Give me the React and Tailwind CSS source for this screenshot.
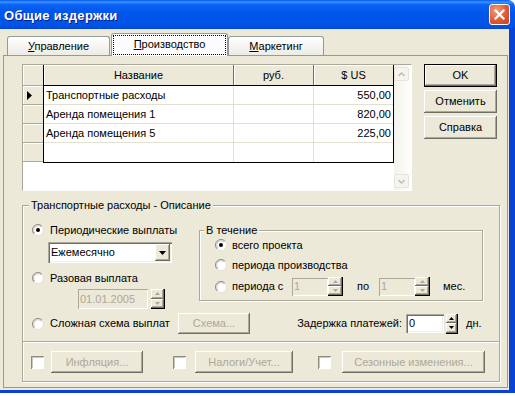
import React from "react";

const raised =
  "bg-[#ECE9D8] shadow-[inset_-1px_-1px_#716F64,inset_1px_1px_#FFFFFF,inset_-2px_-2px_#ACA899]";
const sunken =
  "shadow-[inset_1px_1px_#ACA899,inset_2px_2px_#716F64,inset_-1px_-1px_#FFFFFF,inset_-2px_-2px_#F1EFE2]";
const sunkenLite = "shadow-[inset_1px_1px_#ACA899,inset_-1px_-1px_#FFFFFF]";

function Radio({ checked }) {
  return (
    <svg width="12" height="12" viewBox="0 0 12 12" className="shrink-0">
      <circle cx="6" cy="6" r="5.5" fill="#FFFFFF" stroke="#E2E0D6" />
      <path d="M2.1 9.9 A5.5 5.5 0 0 1 9.9 2.1" fill="none" stroke="#8E8C82" />
      <path d="M3 9 A4.2 4.2 0 0 1 9 3" fill="none" stroke="#C9C6BA" />
      {checked && <circle cx="6" cy="6" r="2" fill="#000000" />}
    </svg>
  );
}

function Checkbox() {
  return (
    <div className="h-[13px] w-[13px] shrink-0 bg-white shadow-[inset_1px_1px_#8E8C82,inset_-1px_-1px_#FFFFFF,inset_2px_2px_#C9C6BA]" />
  );
}

function Arrow({ dir, color }) {
  return (
    <svg width="7" height="4" viewBox="0 0 7 4">
      {dir === "up" ? (
        <path d="M3.5 0 L7 4 L0 4 Z" fill={color} />
      ) : (
        <path d="M0 0 L7 0 L3.5 4 Z" fill={color} />
      )}
    </svg>
  );
}

function SmallArrow({ dir, color }) {
  return (
    <svg width="5" height="3" viewBox="0 0 5 3">
      {dir === "up" ? (
        <path d="M2.5 0 L5 3 L0 3 Z" fill={color} />
      ) : (
        <path d="M0 0 L5 0 L2.5 3 Z" fill={color} />
      )}
    </svg>
  );
}

function Spin({ disabled, className }) {
  const color = disabled ? "#ACA899" : "#000000";
  return (
    <div className={`flex shrink-0 flex-col border-r border-b border-black ${className}`}>
      <div className={`flex flex-1 items-center justify-center ${raised}`}>
        <SmallArrow dir="up" color={color} />
      </div>
      <div className={`flex flex-1 items-center justify-center ${raised}`}>
        <SmallArrow dir="down" color={color} />
      </div>
    </div>
  );
}

function Button({ children, disabled, isDefault, className }) {
  return (
    <div
      className={`flex shrink-0 items-center justify-center ${raised} ${
        disabled ? "text-[#ACA899]" : "text-black"
      } ${isDefault ? "border border-black" : ""} ${className}`}
    >
      {children}
    </div>
  );
}

function Chevron({ dir }) {
  return (
    <svg width="7" height="5" viewBox="0 0 7 5">
      <path
        d={dir === "up" ? "M0.5 4 L3.5 1 L6.5 4" : "M0.5 1 L3.5 4 L6.5 1"}
        fill="none"
        stroke="#C3C1B6"
        strokeWidth="1.6"
      />
    </svg>
  );
}

const rows = [
  ["Транспортные расходы", "550,00"],
  ["Аренда помещения 1", "820,00"],
  ["Аренда помещения 5", "225,00"],
  ["", ""],
];

function Grid() {
  return (
    <div className="flex h-[127px] w-[390px] shrink-0 border border-t-[#ACA899] border-l-[#ACA899] border-r-white border-b-white bg-white">
      <div className="flex w-[20px] flex-col self-start">
        <div className="h-[21px] border-b border-[#ACA899] bg-[#ECE9D8] shadow-[inset_1px_1px_#FFFFFF]" />
        {rows.map((row, i) => (
          <div
            key={i}
            className="flex h-[19px] items-center border-b border-[#ACA899] bg-[#ECE9D8] pl-[4px] shadow-[inset_1px_1px_#FFFFFF]"
          >
            {i === 0 && (
              <svg width="5" height="9" viewBox="0 0 5 9">
                <path d="M0 0 L5 4.5 L0 9 Z" fill="#000000" />
              </svg>
            )}
          </div>
        ))}
      </div>

      <div className="flex w-[351px] flex-col self-start border-x border-b border-black">
        <div className="flex h-[21px] border-b border-black bg-[#ECE9D8]">
          <div className="flex w-[190px] items-center justify-center border-r border-[#716F64] shadow-[inset_1px_1px_#FFFFFF]">
            Название
          </div>
          <div className="flex w-[80px] items-center justify-center border-r border-[#716F64] shadow-[inset_1px_1px_#FFFFFF]">
            руб.
          </div>
          <div className="flex flex-1 items-center justify-center shadow-[inset_1px_1px_#FFFFFF]">
            $ US
          </div>
        </div>
        {rows.map((row, i) => (
          <div
            key={i}
            className={`flex h-[19px] ${i < rows.length - 1 ? "border-b border-[#E2DFD3]" : "h-[18px]"}`}
          >
            <div className="flex w-[190px] items-center border-r border-[#E2DFD3] pl-[2px]">
              {row[0]}
            </div>
            <div className="w-[80px] border-r border-[#E2DFD3]" />
            <div className="flex flex-1 items-center justify-end pr-[2px]">{row[1]}</div>
          </div>
        ))}
      </div>

      <div className="flex w-[17px] flex-col justify-between bg-[linear-gradient(to_right,#F3F2EC,#FEFEFB)] py-[2px]">
        <div className="flex h-[14px] w-[15px] items-center justify-center rounded-[2px] border border-[#E6E4DB] bg-[#F5F4EF]">
          <Chevron dir="up" />
        </div>
        <div className="flex h-[14px] w-[15px] items-center justify-center rounded-[2px] border border-[#E6E4DB] bg-[#F5F4EF]">
          <Chevron dir="down" />
        </div>
      </div>
    </div>
  );
}

function Tab({ active, width, children }) {
  if (active) {
    return (
      <div
        className={`relative z-10 -mb-px flex h-[23px] shrink-0 rounded-t-[3px] border border-b-0 border-[#919B9C] bg-[#FCFCFE] p-[1px] ${width}`}
      >
        <div className="flex flex-1 items-center justify-center border border-dotted border-black pb-[2px]">
          {children}
        </div>
      </div>
    );
  }
  return (
    <div
      className={`flex h-[19px] shrink-0 items-center justify-center rounded-t-[3px] border border-b-0 border-[#919B9C] bg-[linear-gradient(#FFFFFF,#ECEBE6)] ${width}`}
    >
      {children}
    </div>
  );
}

export default function App() {
  return (
    <div className="h-[396px] w-[515px] overflow-hidden bg-white font-['Liberation_Sans',Arial,sans-serif] text-[11px] leading-[13px] text-black select-none">
      <div className="flex h-[393px] flex-col">
        {/* title bar */}
        <div className="flex h-[29px] shrink-0 items-center justify-between rounded-tr-[7px] bg-[linear-gradient(180deg,#0058EE_0%,#3D95FF_7%,#0A62F6_16%,#0055EA_45%,#0054E8_80%,#0050E2_92%,#0045D2_100%)] pl-[4px] pr-[5px]">
          <span className="pt-[2px] text-[13px] font-bold tracking-[0.3px] text-white [text-shadow:1px_1px_#0A1E8C]">
            Общие издержки
          </span>
          <div className="flex h-[21px] w-[21px] items-center justify-center rounded-[3px] border border-white bg-[radial-gradient(circle_at_35%_30%,#F4A07E,#E2592F_55%,#C6401A)]">
            <svg width="11" height="11" viewBox="0 0 11 11">
              <path d="M1.5 1.5 L9.5 9.5 M9.5 1.5 L1.5 9.5" stroke="#FFFFFF" strokeWidth="2.2" strokeLinecap="square" />
            </svg>
          </div>
        </div>

        {/* body */}
        <div className="flex flex-1 flex-col border-r-[6px] border-b-[3px] border-[#0842D6] bg-[#ECE9D8] pt-[4px]">
          <div className="flex h-[22px] items-end pl-[7px]">
            <Tab width="w-[103px] mr-[1px]">
              <span>
                <span className="underline">У</span>правление
              </span>
            </Tab>
            <Tab active width="w-[117px]">
              <span>
                <span className="underline">П</span>роизводство
              </span>
            </Tab>
            <Tab width="w-[96px]">
              <span>
                <span className="underline">М</span>аркетинг
              </span>
            </Tab>
          </div>

          <div className="ml-[3px] flex h-[333px] w-[505px] flex-col border border-[#919B9C] bg-[#ECE9D8]">
            <div className="mt-[8px] ml-[18px] flex">
              <Grid />
              <div className="ml-[12px] flex w-[73px] flex-col gap-[3px]">
                <Button isDefault className="h-[23px] w-[73px]">
                  OK
                </Button>
                <Button className="h-[23px] w-[73px]">Отменить</Button>
                <Button className="h-[23px] w-[73px]">Справка</Button>
              </div>
            </div>

            <fieldset className="mt-[7px] ml-[18px] flex h-[184px] w-[478px] flex-col border border-[#ACA899] shadow-[1px_1px_0_#FFFFFF,inset_1px_1px_0_#FFFFFF]">
              <legend className="ml-[6px] bg-[#ECE9D8] px-[2px] leading-[14px]">
                Транспортные расходы - Описание
              </legend>

              <div className="flex">
                <div className="flex w-[176px] flex-col pl-[9px]">
                  <div className="mt-[11px] flex h-[14px] items-center gap-[6px]">
                    <Radio checked />
                    <span>Периодические выплаты</span>
                  </div>
                  <div className={`mt-[5px] ml-[16px] flex h-[21px] w-[124px] items-center bg-white p-[2px] ${sunken}`}>
                    <span className="flex-1 pl-[1px]">Ежемесячно</span>
                    <div className={`flex h-[17px] w-[15px] items-center justify-center ${raised}`}>
                      <Arrow dir="down" color="#000000" />
                    </div>
                  </div>
                  <div className="mt-[8px] flex h-[14px] items-center gap-[6px]">
                    <Radio />
                    <span>Разовая выплата</span>
                  </div>
                  <div className="mt-[4px] ml-[46px] flex h-[20px]">
                    <div className={`flex h-[20px] w-[70px] items-center bg-[#ECE9D8] pl-[2px] text-[#ACA899] ${sunkenLite}`}>
                      01.01.2005
                    </div>
                    <Spin disabled className="ml-[3px] h-[20px] w-[14px]" />
                  </div>
                </div>

                <fieldset className="mt-[11px] flex h-[78px] w-[284px] flex-col border border-[#ACA899] shadow-[1px_1px_0_#FFFFFF,inset_1px_1px_0_#FFFFFF]">
                  <legend className="ml-[4px] bg-[#ECE9D8] px-[2px] leading-[14px]">В течение</legend>
                  <div className="mt-[1px] flex h-[14px] items-center gap-[5px] pl-[15px]">
                    <Radio checked />
                    <span>всего проекта</span>
                  </div>
                  <div className="mt-[6px] flex h-[14px] items-center gap-[5px] pl-[15px]">
                    <Radio />
                    <span>периода производства</span>
                  </div>
                  <div className="mt-[5px] flex h-[19px] items-center pl-[15px]">
                    <Radio />
                    <span className="ml-[5px] w-[60px]">периода с</span>
                    <div className={`flex h-[18px] w-[36px] items-center bg-[#ECE9D8] pl-[2px] text-[#ACA899] ${sunkenLite}`}>
                      1
                    </div>
                    <Spin disabled className="h-[19px] w-[15px]" />
                    <span className="ml-[14px] w-[22px]">по</span>
                    <div className={`flex h-[18px] w-[36px] items-center bg-[#ECE9D8] pl-[2px] text-[#ACA899] ${sunkenLite}`}>
                      1
                    </div>
                    <Spin disabled className="h-[19px] w-[15px]" />
                    <span className="ml-[13px]">мес.</span>
                  </div>
                </fieldset>
              </div>

              <div className="mt-[4px] flex h-[21px] items-center">
                <div className="ml-[9px] flex w-[146px] items-center gap-[6px]">
                  <Radio />
                  <span>Сложная схема выплат</span>
                </div>
                <Button disabled className="h-[21px] w-[72px]">
                  Схема...
                </Button>
                <span className="w-[154px] pr-[2px] text-right">Задержка платежей:</span>
                <div className={`ml-[2px] flex h-[19px] w-[38px] items-center bg-white pl-[3px] ${sunken}`}>0</div>
                <Spin className="ml-[2px] h-[20px] w-[12px]" />
                <span className="ml-[8px]">дн.</span>
              </div>

              <div className="mt-[7px] h-[2px] border-t border-b border-t-[#ACA899] border-b-white" />

              <div className="mt-[8px] flex h-[22px] items-center pl-[8px]">
                <Checkbox />
                <Button disabled className="ml-[7px] h-[22px] w-[92px]">
                  Инфляция...
                </Button>
                <div className="ml-[30px]">
                  <Checkbox />
                </div>
                <Button disabled className="ml-[9px] h-[22px] w-[98px]">
                  Налоги/Учет...
                </Button>
                <div className="ml-[25px]">
                  <Checkbox />
                </div>
                <Button disabled className="ml-[11px] h-[22px] w-[143px]">
                  Сезонные изменения...
                </Button>
              </div>
            </fieldset>
          </div>
        </div>
      </div>
    </div>
  );
}
